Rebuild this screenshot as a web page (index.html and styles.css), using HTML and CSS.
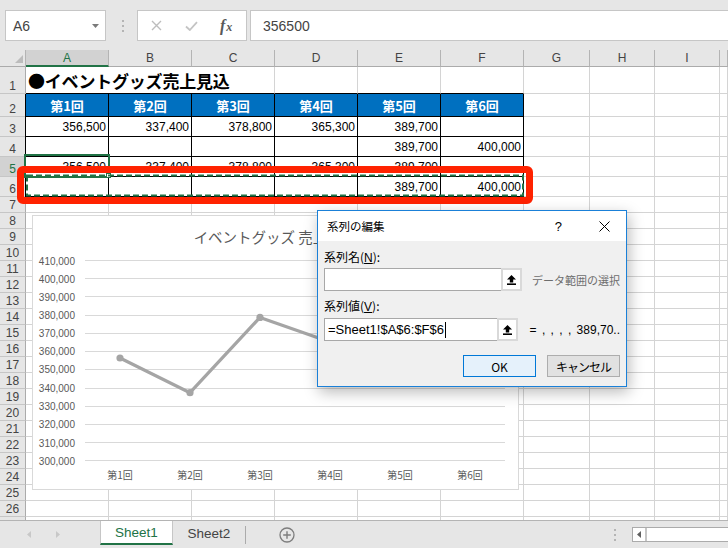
FILE: index.html
```html
<!DOCTYPE html>
<html lang="ja">
<head>
<meta charset="utf-8">
<title>系列の編集</title>
<link rel="stylesheet" href="styles.css">
</head>
<body>
<div class="app">
  <div class="toolbar">
    <div class="namebox"><span>A6</span><svg width="7" height="4" viewBox="0 0 7 4"><path d="M0 0H7L3.5 4Z" fill="#7a7a7a"/></svg></div>
    <svg class="grip" width="2" height="12" viewBox="0 0 2 12"><rect y="0" width="2" height="2"/><rect y="5" width="2" height="2"/><rect y="10" width="2" height="2"/></svg>
    <div class="fxbox">
      <svg class="ico-x" width="11" height="11" viewBox="0 0 11 11"><path d="M1 1L10 10M10 1L1 10" stroke="#bdbdbd" stroke-width="1.4"/></svg>
      <svg class="ico-ok" width="13" height="10" viewBox="0 0 13 10"><path d="M1 5.5L4.8 9L12 1.2" stroke="#c4c4c4" stroke-width="1.8" fill="none"/></svg>
      <span class="fx"><span class="f">f</span><span class="x">x</span></span>
    </div>
    <div class="formula">356500</div>
  </div>

  <div class="sheet">
    <div class="row hdr"><span class="corner"><svg width="8" height="8" viewBox="0 0 8 8"><path d="M8 0V8H0Z" fill="#bcbcbc"/></svg></span><span class="selc">A</span><span>B</span><span>C</span><span>D</span><span>E</span><span>F</span><span>G</span><span>H</span><span>I</span><span></span></div>
    <div class="row h27"><span class="rh">1</span><span class="title tb">●イベントグッズ売上見込</span><span class="tb"></span><span class="tb"></span><span class="tb"></span><span></span><span></span><span></span><span></span></div>
    <div class="row h23"><span class="rh">2</span><span class="blue tl">第1回</span><span class="blue">第2回</span><span class="blue">第3回</span><span class="blue">第4回</span><span class="blue">第5回</span><span class="blue">第6回</span><span></span><span></span><span></span><span></span></div>
    <div class="row h20"><span class="rh">3</span><span class="t tl">356,500</span><span class="t">337,400</span><span class="t">378,800</span><span class="t">365,300</span><span class="t">389,700</span><span class="t"></span><span></span><span></span><span></span><span></span></div>
    <div class="row h20"><span class="rh">4</span><span class="t tl"></span><span class="t"></span><span class="t"></span><span class="t"></span><span class="t">389,700</span><span class="t">400,000</span><span></span><span></span><span></span><span></span></div>
    <div class="row h20"><span class="rh selr">5</span><span class="t tl">356,500</span><span class="t">337,400</span><span class="t">378,800</span><span class="t">365,300</span><span class="t">389,700</span><span class="t"></span><span></span><span></span><span></span><span></span></div>
    <div class="row h20"><span class="rh">6</span><span class="t tl"></span><span class="t"></span><span class="t"></span><span class="t"></span><span class="t">389,700</span><span class="t">400,000</span><span></span><span></span><span></span><span></span></div>
    <div class="row h16"><span class="rh">7</span><span></span><span></span><span></span><span></span><span></span><span></span><span></span><span></span><span></span><span></span></div>
    <div class="row h16"><span class="rh">8</span><span></span><span></span><span></span><span></span><span></span><span></span><span></span><span></span><span></span><span></span></div>
    <div class="row h16"><span class="rh">9</span><span></span><span></span><span></span><span></span><span></span><span></span><span></span><span></span><span></span><span></span></div>
    <div class="row h16"><span class="rh">10</span><span></span><span></span><span></span><span></span><span></span><span></span><span></span><span></span><span></span><span></span></div>
    <div class="row h16"><span class="rh">11</span><span></span><span></span><span></span><span></span><span></span><span></span><span></span><span></span><span></span><span></span></div>
    <div class="row h16"><span class="rh">12</span><span></span><span></span><span></span><span></span><span></span><span></span><span></span><span></span><span></span><span></span></div>
    <div class="row h16"><span class="rh">13</span><span></span><span></span><span></span><span></span><span></span><span></span><span></span><span></span><span></span><span></span></div>
    <div class="row h16"><span class="rh">14</span><span></span><span></span><span></span><span></span><span></span><span></span><span></span><span></span><span></span><span></span></div>
    <div class="row h16"><span class="rh">15</span><span></span><span></span><span></span><span></span><span></span><span></span><span></span><span></span><span></span><span></span></div>
    <div class="row h16"><span class="rh">16</span><span></span><span></span><span></span><span></span><span></span><span></span><span></span><span></span><span></span><span></span></div>
    <div class="row h16"><span class="rh">17</span><span></span><span></span><span></span><span></span><span></span><span></span><span></span><span></span><span></span><span></span></div>
    <div class="row h16"><span class="rh">18</span><span></span><span></span><span></span><span></span><span></span><span></span><span></span><span></span><span></span><span></span></div>
    <div class="row h16"><span class="rh">19</span><span></span><span></span><span></span><span></span><span></span><span></span><span></span><span></span><span></span><span></span></div>
    <div class="row h16"><span class="rh">20</span><span></span><span></span><span></span><span></span><span></span><span></span><span></span><span></span><span></span><span></span></div>
    <div class="row h16"><span class="rh">21</span><span></span><span></span><span></span><span></span><span></span><span></span><span></span><span></span><span></span><span></span></div>
    <div class="row h16"><span class="rh">22</span><span></span><span></span><span></span><span></span><span></span><span></span><span></span><span></span><span></span><span></span></div>
    <div class="row h16"><span class="rh">23</span><span></span><span></span><span></span><span></span><span></span><span></span><span></span><span></span><span></span><span></span></div>
    <div class="row h16"><span class="rh">24</span><span></span><span></span><span></span><span></span><span></span><span></span><span></span><span></span><span></span><span></span></div>
    <div class="row h16"><span class="rh">25</span><span></span><span></span><span></span><span></span><span></span><span></span><span></span><span></span><span></span><span></span></div>
    <div class="row h16"><span class="rh">26</span><span></span><span></span><span></span><span></span><span></span><span></span><span></span><span></span><span></span><span></span></div>
    <div class="row h16"><span class="rh"></span><span></span><span></span><span></span><span></span><span></span><span></span><span></span><span></span><span></span><span></span></div>
  </div>

  <div class="tabs">
    <div class="nav">
      <svg width="4" height="7" viewBox="0 0 4 7"><path d="M4 0V7L0 3.5Z" fill="#c8c8c8"/></svg>
      <svg class="next" width="4" height="7" viewBox="0 0 4 7"><path d="M0 0V7L4 3.5Z" fill="#c8c8c8"/></svg>
    </div>
    <div class="tab on">Sheet1</div>
    <div class="tab">Sheet2</div>
    <span class="sep"></span>
    <svg class="add" width="16" height="16" viewBox="0 0 16 16"><circle cx="8" cy="8" r="7" fill="none" stroke="#7d7d7d" stroke-width="1.3"/><path d="M8 4.2V11.8M4.2 8H11.8" stroke="#7d7d7d" stroke-width="1.4"/></svg>
    <svg class="vgrip" width="2" height="12" viewBox="0 0 2 12"><rect y="0" width="2" height="2"/><rect y="5" width="2" height="2"/><rect y="10" width="2" height="2"/></svg>
    <div class="hscroll"><span class="sbtn"><svg width="4" height="7" viewBox="0 0 4 7"><path d="M4 0V7L0 3.5Z" fill="#606060"/></svg></span></div>
  </div>

  <div class="active"></div>
  <div class="handle"></div>
  <svg class="marquee" width="500" height="26" viewBox="0 0 500 26"><rect x="2" y="2.5" width="496" height="20" fill="none" stroke="#217346" stroke-width="2" stroke-dasharray="6 3"/></svg>
  <div class="redbox"></div>

  <svg class="chart" width="487" height="275" viewBox="32 215 487 275">
    <rect x="32.5" y="215.5" width="486" height="274" fill="#fff" stroke="#d9d9d9"/>
    <text class="ctitle" x="275" y="243">イベントグッズ 売上見込</text>
    <g stroke="#d9d9d9" stroke-width="1">
      <line x1="85" x2="505" y1="260.5" y2="260.5"/>
      <line x1="85" x2="505" y1="278.5" y2="278.5"/>
      <line x1="85" x2="505" y1="296.5" y2="296.5"/>
      <line x1="85" x2="505" y1="315.5" y2="315.5"/>
      <line x1="85" x2="505" y1="333.5" y2="333.5"/>
      <line x1="85" x2="505" y1="351.5" y2="351.5"/>
      <line x1="85" x2="505" y1="369.5" y2="369.5"/>
      <line x1="85" x2="505" y1="388.5" y2="388.5"/>
      <line x1="85" x2="505" y1="406.5" y2="406.5"/>
      <line x1="85" x2="505" y1="424.5" y2="424.5"/>
      <line x1="85" x2="505" y1="442.5" y2="442.5"/>
      <line x1="85" x2="505" y1="460.5" y2="460.5"/>
    </g>
    <g class="yl">
      <text x="75" y="264.5">410,000</text>
      <text x="75" y="282.5">400,000</text>
      <text x="75" y="300.5">390,000</text>
      <text x="75" y="319">380,000</text>
      <text x="75" y="337">370,000</text>
      <text x="75" y="355">360,000</text>
      <text x="75" y="373">350,000</text>
      <text x="75" y="392">340,000</text>
      <text x="75" y="410">330,000</text>
      <text x="75" y="428">320,000</text>
      <text x="75" y="446.5">310,000</text>
      <text x="75" y="464.5">300,000</text>
    </g>
    <g class="xl">
      <text x="120" y="479">第1回</text>
      <text x="190" y="479">第2回</text>
      <text x="260" y="479">第3回</text>
      <text x="330" y="479">第4回</text>
      <text x="400" y="479">第5回</text>
      <text x="470" y="479">第6回</text>
    </g>
    <polyline points="120,358 190,392.7 260,317.4 330,342 400,297.6" fill="none" stroke="#a5a5a5" stroke-width="3.2" stroke-linejoin="round" stroke-linecap="round"/>
    <g fill="#a5a5a5">
      <circle cx="120" cy="358" r="3.6"/>
      <circle cx="190" cy="392.7" r="3.6"/>
      <circle cx="260" cy="317.4" r="3.6"/>
      <circle cx="330" cy="342" r="3.6"/>
      <circle cx="400" cy="297.6" r="3.6"/>
    </g>
  </svg>

  <div class="dialog">
    <div class="dtitle">
      <span class="dname">系列の編集</span>
      <span class="help">?</span>
      <svg class="close" width="11" height="11" viewBox="0 0 11 11"><path d="M0.5 0.5L10.5 10.5M10.5 0.5L0.5 10.5" stroke="#000" stroke-width="1"/></svg>
    </div>
    <div class="dbody">
      <div class="lbl">系列名(<u>N</u>):</div>
      <div class="frow">
        <div class="field"><div class="inp"></div><div class="pick"><svg width="9" height="10" viewBox="0 0 9 10"><path d="M4.5 0L9 4.5H6.2V7.4H2.8V4.5H0Z" fill="#000"/><rect x="0" y="8.4" width="9" height="1.6" fill="#000"/></svg></div></div>
        <span class="hint">データ範囲の選択</span>
      </div>
      <div class="lbl">系列値(<u>V</u>):</div>
      <div class="frow second">
        <div class="field"><div class="inp">=Sheet1!$A$6:$F$6<span class="caret"></span></div><div class="pick"><svg width="9" height="10" viewBox="0 0 9 10"><path d="M4.5 0L9 4.5H6.2V7.4H2.8V4.5H0Z" fill="#000"/><rect x="0" y="8.4" width="9" height="1.6" fill="#000"/></svg></div></div>
        <span class="val">= , , , , 389,70..</span>
      </div>
      <div class="btns">
        <button class="ok">OK</button>
        <button class="cancel">キャンセル</button>
      </div>
    </div>
  </div>
</div>
</body>
</html>
```

FILE: styles.css
```css
* { box-sizing: border-box; margin: 0; padding: 0; }
html, body { width: 728px; height: 548px; overflow: hidden; background: #fff; }
body { font-family: "Liberation Sans", "Noto Sans CJK JP", sans-serif; color: #000; }

.app { position: relative; width: 728px; height: 548px; overflow: hidden; display: flex; flex-direction: column; }

/* ---------- formula bar ---------- */
.toolbar { flex: none; height: 50px; background: #e6e6e6; display: flex; align-items: flex-start; padding-top: 10px; }
.namebox { margin-left: 5px; width: 101px; height: 31px; background: #fff; border: 1px solid #c6c6c6; display: flex; align-items: center; justify-content: space-between; padding: 0 6px 0 7px; font-size: 14px; color: #444; }
.grip { margin: 10px 0 0 16px; fill: #b4b4b4; }
.fxbox { margin-left: 13px; width: 110px; height: 31px; background: #fff; border: 1px solid #c6c6c6; display: flex; align-items: center; padding-left: 13px; }
.ico-ok { margin-left: 23px; }
.fx { margin-left: 22px; font-family: "Liberation Serif", serif; font-style: italic; font-weight: bold; color: #595959; display: flex; align-items: baseline; }
.fx .f { font-size: 16px; }
.fx .x { font-size: 12px; margin-left: 1px; }
.formula { flex: 1; margin-left: 3px; height: 31px; background: #fff; border: 1px solid #c6c6c6; border-right: none; display: flex; align-items: center; padding-left: 12px; font-size: 14px; color: #444; }

/* ---------- grid ---------- */
.sheet { flex: none; height: 470px; overflow: hidden; }
.row { display: grid; grid-template-columns: 26px repeat(6, 83px) 66px 65px 65px 8px; }
.row > span { border-right: 1px solid #d4d4d4; border-bottom: 1px solid #d4d4d4; display: flex; align-items: center; white-space: nowrap; font-size: 12px; overflow: visible; }
.hdr { height: 17px; }
.h27 { height: 27px; }
.h23 { height: 23px; }
.h20 { height: 20px; }
.h16 { height: 16px; }

.hdr > span { background: #e6e6e6; border-right-color: #b4b4b4; border-bottom-color: #ababab; justify-content: center; align-items: flex-end; padding-bottom: 1px; font-size: 12px; color: #444; }
.hdr > .corner { justify-content: flex-end; padding: 0 2px 3px 0; }
.hdr > .selc { background: #d2d2d2; color: #217346; border-bottom: 2px solid #217346; padding-bottom: 0; }

.row > .rh { background: #e6e6e6; border-right-color: #ababab; border-bottom-color: #c6c6c6; justify-content: center; align-items: flex-end; line-height: 14px; font-size: 12px; color: #444; }
.row > .selr { background: #d2d2d2; color: #217346; }

.row > .title { grid-column: span 3; font-family: "Noto Sans CJK JP", sans-serif; font-size: 17px; font-weight: bold; padding-left: 2px; letter-spacing: -0.2px; }
.row > .tb { border-bottom-color: #000; }
.row > .t { border-right-color: #000; border-bottom-color: #000; justify-content: flex-end; padding-right: 2px; font-size: 12px; color: #000; }
.row > .tl { box-shadow: -1px 0 0 #000; }
.row > .blue { background: #0070c0; color: #fff; font-weight: bold; justify-content: center; border-right-color: #000; border-bottom-color: #000; font-family: "Noto Sans CJK JP", sans-serif; font-size: 13px; }

/* ---------- sheet tabs ---------- */
.tabs { flex: none; height: 28px; background: #e6e6e6; border-top: 1px solid #b4b4b4; display: flex; align-items: center; }
.nav { width: 100px; display: flex; align-items: center; padding-left: 27px; }
.nav .next { margin-left: 25px; }
.tab { align-self: flex-start; height: 24px; width: 72px; display: flex; align-items: center; justify-content: center; font-size: 13.5px; color: #444; }
.tab.on { width: 73px; background: #fff; color: #217346; border-left: 1px solid #c6c6c6; border-right: 1px solid #c6c6c6; border-bottom: 2px solid #217346; }
.sep { width: 1px; height: 18px; background: #ababab; }
.add { margin-left: 33px; }
.vgrip { margin-left: auto; fill: #b4b4b4; }
.hscroll { margin-left: 16px; width: 96px; height: 15px; align-self: flex-start; margin-top: 6px; background: #fff; border: 1px solid #ababab; border-right: none; display: flex; }
.sbtn { width: 14px; height: 13px; border-right: 2px solid #c6c6c6; display: flex; align-items: center; justify-content: center; }

/* ---------- selection overlays ---------- */
.active { position: absolute; left: 24px; top: 154px; width: 86px; height: 24px; border: 2px solid #217346; }
.handle { position: absolute; left: 106px; top: 173px; width: 5px; height: 5px; background: #fff; border: 1px solid #217346; }
.marquee { position: absolute; left: 25px; top: 173px; }
.redbox { position: absolute; left: 17px; top: 166px; width: 516px; height: 38px; border: 7px solid #ff2200; border-radius: 6px; }

/* ---------- chart ---------- */
.chart { position: absolute; left: 32px; top: 215px; }
.ctitle { font-family: "Noto Sans CJK JP", sans-serif; font-size: 14.5px; fill: #595959; text-anchor: middle; }
.yl text { font-family: "Liberation Sans", sans-serif; font-size: 10px; fill: #595959; text-anchor: end; }
.xl text { font-family: "Noto Sans CJK JP", sans-serif; font-size: 10px; fill: #595959; text-anchor: middle; }

/* ---------- dialog ---------- */
.dialog { position: absolute; left: 317px; top: 210px; width: 310px; height: 177px; background: #f0f0f0; border: 1px solid #1a80d8; box-shadow: 2px 5px 14px rgba(0, 0, 0, 0.28); font-family: "Noto Sans CJK JP", sans-serif; }
.dtitle { height: 30px; background: #fff; display: flex; align-items: center; padding-left: 9px; }
.dname { font-size: 11.5px; }
.help { margin-left: auto; font-family: "Liberation Sans", sans-serif; font-size: 13px; }
.close { margin-left: 37px; margin-right: 16px; }
.dbody { padding: 0 6px; }
.lbl { margin-top: 8px; height: 16px; line-height: 16px; font-size: 12px; }
.frow + .lbl { margin-top: 7px; }
.lbl u { font-family: "Liberation Sans", sans-serif; text-decoration: underline; }
.frow { margin-top: 3px; height: 23px; display: flex; align-items: center; }
.frow.second { margin-top: 4px; }
.field { width: 199px; height: 23px; display: flex; }
.inp { flex: 1; height: 23px; background: #fff; border: 1px solid #a8a8a8; border-right: none; display: flex; align-items: center; padding-left: 3px; font-family: "Liberation Sans", sans-serif; font-size: 13px; color: #000; }
.caret { width: 1px; height: 16px; background: #000; margin-left: 1px; }
.pick { width: 21px; height: 23px; background: #fff; border: 2px solid #d9d9d9; outline: none; box-shadow: 0 0 0 0 transparent; display: flex; align-items: center; justify-content: center; }
.hint { margin-left: 10px; font-size: 11px; color: #6d6d6d; white-space: nowrap; }
.val { margin-left: 12px; font-family: "Liberation Sans", sans-serif; font-size: 12px; word-spacing: 2px; white-space: nowrap; }
.btns { margin-top: 14px; display: flex; justify-content: flex-end; gap: 11px; }
.btns button { width: 73px; height: 22px; font-family: "Noto Sans CJK JP", sans-serif; font-size: 12px; color: #000; }
.ok { background: #e5f1fb; border: 1px solid #0078d7; font-family: "Liberation Sans", sans-serif; }
.cancel { background: #e1e1e1; border: 1px solid #adadad; letter-spacing: -1px; font-size: 11px; }
```
